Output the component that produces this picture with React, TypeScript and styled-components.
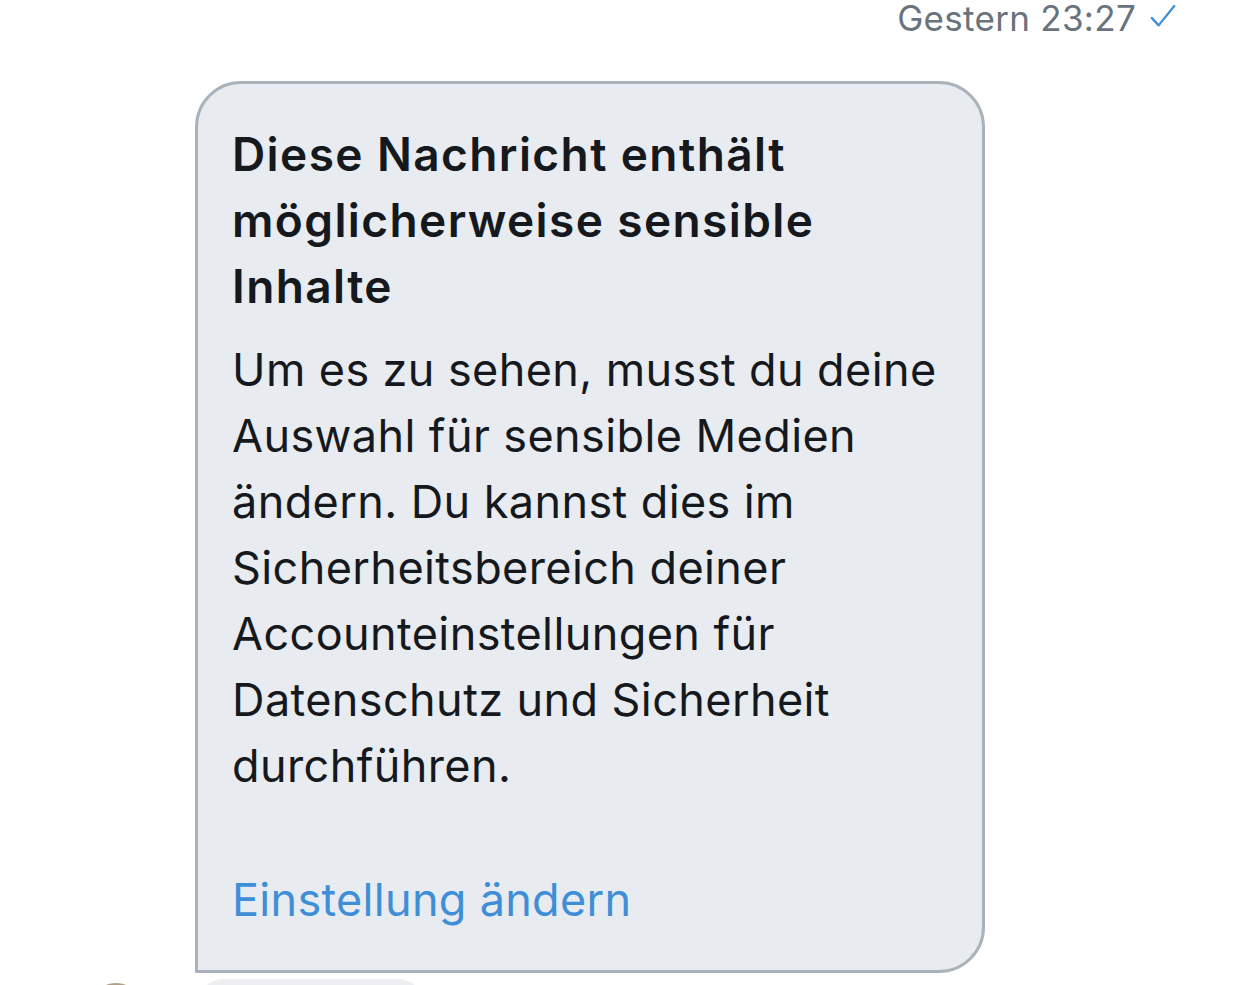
import React from 'react';
import styled, { createGlobalStyle } from 'styled-components';

const GlobalStyle = createGlobalStyle`
  html, body {
    margin: 0;
    padding: 0;
    background: #ffffff;
    height: 985px;
    overflow: hidden;
  }
  body {
    font-family: Inter, "Noto Sans", sans-serif;
    -webkit-font-smoothing: antialiased;
  }
`;

const Page = styled.div`
  display: flex;
  flex-direction: column;
`;

const Meta = styled.div`
  display: flex;
  justify-content: flex-end;
  align-items: center;
  gap: 12px;
  padding-right: 64px;
  padding-top: 0;
  height: 36px;
  color: #69737d;
  font-size: 35px;
  line-height: 34px;
  letter-spacing: 0.3px;
`;

const Tick = styled.svg`
  width: 30px;
  height: 30px;
  margin-top: -4px;
`;

const Bubble = styled.div`
  margin: 45px 0 0 195px;
  width: 790px;
  box-sizing: border-box;
  height: 892px;
  background: #e8ebef;
  border: 3px solid #aab3bb;
  border-radius: 46px 46px 46px 0;
  padding: 37px 36px 0 34px;
  color: #15191d;
`;

const Title = styled.div`
  max-width: 600px;
  font-size: 46px;
  font-weight: 600;
  line-height: 66px;
  letter-spacing: 1.4px;
`;

const Body = styled.div`
  margin-top: 18px;
  font-size: 45px;
  font-weight: 400;
  line-height: 66px;
  letter-spacing: 0.4px;
`;

const Link = styled.div`
  margin-top: 68px;
  font-size: 45px;
  line-height: 66px;
  color: #3f8fd8;
  letter-spacing: 0.3px;
`;

const NextRow = styled.div`
  display: flex;
  align-items: flex-start;
  margin-top: 6px;
  height: 60px;
`;

const Avatar = styled.div`
  width: 56px;
  height: 56px;
  border-radius: 50%;
  background: #ad9f8a;
  margin: 4px 0 0 88px;
`;

const NextBubble = styled.div`
  margin-left: 51px;
  width: 232px;
  height: 60px;
  background: #eceef1;
  border-radius: 30px 30px 30px 0;
`;

export default function App() {
  return (
    <Page>
      <GlobalStyle />
      <Meta>
        <span>Gestern 23:27</span>
        <Tick viewBox="0 0 24 24" fill="none" stroke="#3f8fd8" strokeWidth="1.8" strokeLinecap="round" strokeLinejoin="round">
          <path d="M3 13.5l5.5 6L21 4" />
        </Tick>
      </Meta>
      <Bubble>
        <Title>Diese Nachricht enthält möglicherweise sensible Inhalte</Title>
        <Body>
          Um es zu sehen, musst du deine Auswahl für sensible Medien ändern. Du kannst dies im
          Sicherheitsbereich deiner Accounteinstellungen für Datenschutz und Sicherheit durchführen.
        </Body>
        <Link>Einstellung ändern</Link>
      </Bubble>
      <NextRow>
        <Avatar />
        <NextBubble />
      </NextRow>
    </Page>
  );
}
